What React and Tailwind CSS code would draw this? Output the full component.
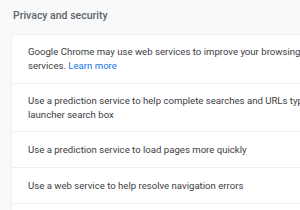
import React from 'react';

const rows = [
  {
    lines: ['Google Chrome may use web services to improve your browsing experience. You may optionally disable these'],
    tail: true,
    h: 'h-[48px]',
  },
  {
    lines: ['Use a prediction service to help complete searches and URLs typed in the address bar or the app', 'launcher search box'],
    h: 'h-[48px]',
  },
  { lines: ['Use a prediction service to load pages more quickly'], h: 'h-[36px]' },
  { lines: ['Use a web service to help resolve navigation errors'], h: 'h-[36px]' },
  { lines: ['Use Safe Browsing to protect you and your device from dangerous sites'], h: 'h-[36px]' },
];

export default function App() {
  return (
    <div className="h-[210px] w-[300px] overflow-hidden bg-[#f8f9fa]" style={{ fontFamily: 'Roboto, "Noto Sans", sans-serif' }}>
      <div className="pl-[13px] pt-[9px] text-[10.5px] leading-[14px] font-medium text-[#5f6368] h-[35px]">
        Privacy and security
      </div>
      <div className="ml-[12px] w-[320px] bg-white rounded-l-[3px] shadow-[0_0_1px_rgba(60,64,67,0.25),0_1px_2px_rgba(60,64,67,0.1)]">
        {rows.map((r, i) => (
          <div
            key={i}
            className={`flex flex-col justify-center pl-[16px] text-[9.6px] leading-[14px] text-[#3c4043] whitespace-nowrap ${i > 0 ? 'border-t border-[#eeeeee]' : ''} ${r.h}`}
          >
            {r.lines.map((l, j) => (
              <div key={j}>{l}</div>
            ))}
            {r.tail && (
              <div>
                services. <span className="text-[#1a73e8]">Learn more</span>
              </div>
            )}
          </div>
        ))}
      </div>
    </div>
  );
}
